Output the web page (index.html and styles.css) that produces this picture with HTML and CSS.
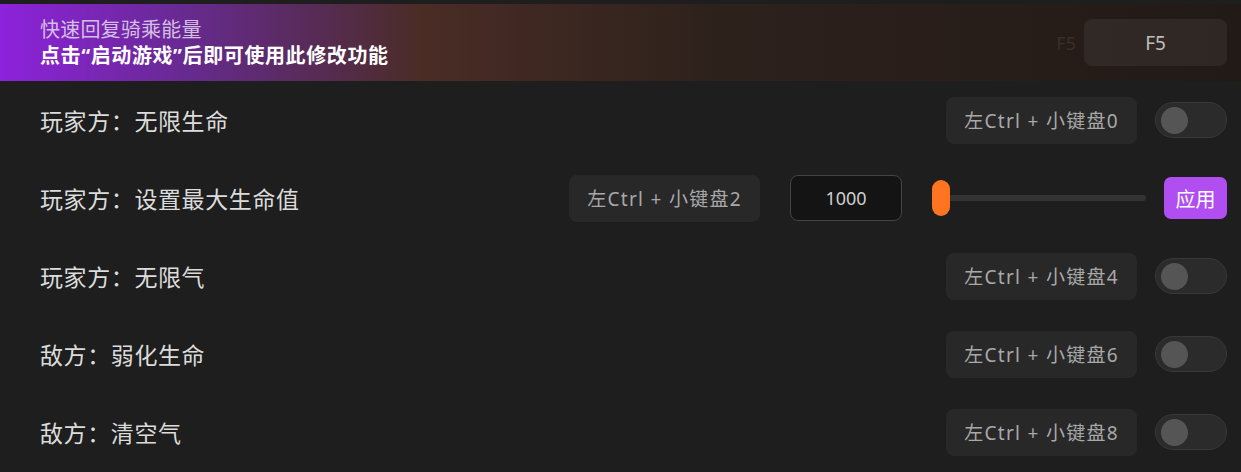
FILE: index.html
```html
<!DOCTYPE html>
<html lang="zh">
<head>
    <meta charset="UTF-8">
    <meta name="viewport" content="width=device-width, initial-scale=1.0">
    <title>修改器</title>
    <link rel="stylesheet" href="styles.css">
</head>
<body>
    <div class="banner">
        <div class="banner-text">
            <p class="banner-title">快速回复骑乘能量</p>
            <p class="banner-tip">点击“启动游戏”后即可使用此修改功能</p>
        </div>
        <div class="banner-key">
            <span class="ghost">F5</span>
            <div class="key big">F5</div>
        </div>
    </div>

    <div class="row">
        <span class="label">玩家方：无限生命</span>
        <div class="controls">
            <div class="key">左Ctrl + 小键盘0</div>
            <div class="toggle"><span class="knob"></span></div>
        </div>
    </div>
    <div class="row">
        <span class="label">玩家方：设置最大生命值</span>
        <div class="controls wide">
            <div class="key">左Ctrl + 小键盘2</div>
            <div class="num">1000</div>
            <div class="slider"><span class="thumb"></span><span class="track"></span></div>
            <button class="apply">应用</button>
        </div>
    </div>
    <div class="row">
        <span class="label">玩家方：无限气</span>
        <div class="controls">
            <div class="key">左Ctrl + 小键盘4</div>
            <div class="toggle"><span class="knob"></span></div>
        </div>
    </div>
    <div class="row">
        <span class="label">敌方：弱化生命</span>
        <div class="controls">
            <div class="key">左Ctrl + 小键盘6</div>
            <div class="toggle"><span class="knob"></span></div>
        </div>
    </div>
    <div class="row">
        <span class="label">敌方：清空气</span>
        <div class="controls">
            <div class="key">左Ctrl + 小键盘8</div>
            <div class="toggle"><span class="knob"></span></div>
        </div>
    </div>
</body>
</html>
```
FILE: styles.css
```css
body {
    margin: 0;
    padding-top: 4px;
    background-color: #1e1e1e;
    font-family: "Noto Sans", "Noto Sans CJK SC", sans-serif;
    color: #d9d9d9;
}
.banner {
    height: 77px;
    display: flex;
    align-items: center;
    justify-content: space-between;
    padding: 0 14px 0 40px;
    background: linear-gradient(90deg, #8d22dc 0%, #672a90 15%, #4a2c25 34%, #2d211c 58%, #221a17 100%);
}
.banner-text p {
    margin: 0;
    line-height: 26px;
}
.banner-title {
    font-size: 20px;
    letter-spacing: 0.2px;
    color: #d4bfe4;
}
.banner-tip {
    font-size: 20px;
    font-weight: bold;
    letter-spacing: 0.6px;
    color: #ffffff;
}
.banner-key {
    display: flex;
    align-items: center;
    gap: 8px;
}
.ghost {
    font-size: 18px;
    color: #3a2f29;
}
.row {
    height: 78px;
    display: flex;
    align-items: center;
    justify-content: space-between;
    padding: 0 14px 0 40px;
}
.label {
    font-size: 23px;
    letter-spacing: 0.6px;
    color: #dcdcdc;
}
.controls {
    display: flex;
    align-items: center;
    gap: 18px;
}
.key {
    height: 47px;
    box-sizing: border-box;
    padding: 0 18px;
    display: flex;
    align-items: center;
    justify-content: center;
    background-color: #282828;
    border-radius: 8px;
    font-size: 19px;
    letter-spacing: 1.3px;
    white-space: pre;
    color: #a8a8a8;
}
.key.big {
    width: 143px;
    letter-spacing: 0;
    background-color: rgba(255, 255, 255, 0.06);
    color: #bdbdbd;
}
.toggle {
    width: 72px;
    height: 36px;
    box-sizing: border-box;
    border: 1px solid #383838;
    border-radius: 18px;
    background-color: #2b2b2b;
    display: flex;
    align-items: center;
    padding-left: 5px;
}
.knob {
    width: 27px;
    height: 27px;
    border-radius: 50%;
    background-color: #555555;
}
.wide {
    gap: 30px;
}
.num {
    width: 112px;
    height: 46px;
    box-sizing: border-box;
    border: 1px solid #444444;
    border-radius: 8px;
    background-color: #141414;
    display: flex;
    align-items: center;
    justify-content: center;
    font-size: 18px;
    color: #cfcfcf;
}
.slider {
    width: 214px;
    display: flex;
    align-items: center;
}
.thumb {
    width: 18px;
    height: 36px;
    border-radius: 9px;
    background-color: #ff7420;
}
.track {
    flex: 1;
    height: 6px;
    border-radius: 0 3px 3px 0;
    background-color: #333333;
}
.apply {
    margin-left: -12px;
    width: 63px;
    height: 42px;
    border: none;
    border-radius: 7px;
    background-color: #b04ef2;
    color: #ffffff;
    font-family: inherit;
    font-size: 20px;
    padding: 0;
}
```
